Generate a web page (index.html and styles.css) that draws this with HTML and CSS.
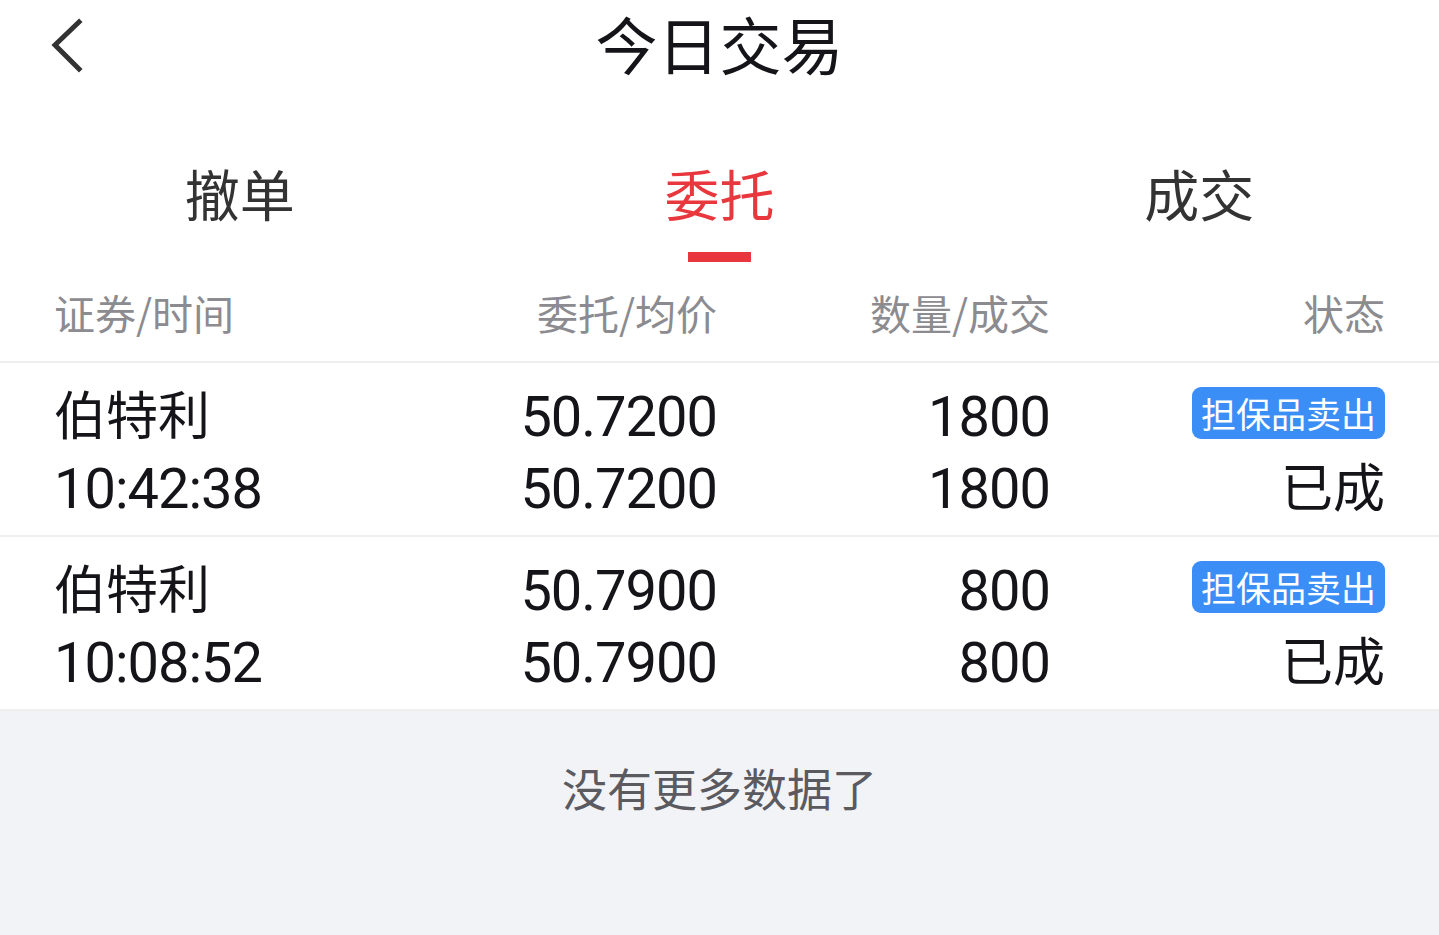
FILE: index.html
```html
<!DOCTYPE html>
<html lang="zh-CN">
<head>
    <meta charset="UTF-8">
    <meta name="viewport" content="width=device-width, initial-scale=1.0">
    <title>今日交易</title>
    <link rel="stylesheet" href="styles.css">
</head>
<body>
    <!-- 顶部导航 -->
    <div class="nav-bar">
        <a class="back-btn" href="#">
            <svg width="40" height="56" viewBox="0 0 40 56">
                <polyline points="29,4 5,27 29,51" fill="none" stroke="#333" stroke-width="5" stroke-linecap="square" stroke-linejoin="miter"/>
            </svg>
        </a>
        <div class="nav-title">今日交易</div>
    </div>

    <!-- 标签页 -->
    <div class="tabs">
        <div class="tab">
            <span class="tab-text">撤单</span>
            <span class="tab-line"></span>
        </div>
        <div class="tab active">
            <span class="tab-text">委托</span>
            <span class="tab-line"></span>
        </div>
        <div class="tab">
            <span class="tab-text">成交</span>
            <span class="tab-line"></span>
        </div>
    </div>

    <!-- 表头 -->
    <div class="list-head">
        <div class="col">证券/时间</div>
        <div class="col right">委托/均价</div>
        <div class="col right">数量/成交</div>
        <div class="col right">状态</div>
    </div>

    <!-- 委托列表 -->
    <div class="list">
        <div class="list-row">
            <div class="col">
                <div class="line">伯特利</div>
                <div class="line num">10:42:38</div>
            </div>
            <div class="col right">
                <div class="line num">50.7200</div>
                <div class="line num">50.7200</div>
            </div>
            <div class="col right">
                <div class="line num">1800</div>
                <div class="line num">1800</div>
            </div>
            <div class="col right">
                <div class="line"><span class="badge">担保品卖出</span></div>
                <div class="line">已成</div>
            </div>
        </div>
        <div class="list-row">
            <div class="col">
                <div class="line">伯特利</div>
                <div class="line num">10:08:52</div>
            </div>
            <div class="col right">
                <div class="line num">50.7900</div>
                <div class="line num">50.7900</div>
            </div>
            <div class="col right">
                <div class="line num">800</div>
                <div class="line num">800</div>
            </div>
            <div class="col right">
                <div class="line"><span class="badge">担保品卖出</span></div>
                <div class="line">已成</div>
            </div>
        </div>
    </div>

    <!-- 底部提示 -->
    <div class="no-more">没有更多数据了</div>
</body>
</html>
```

FILE: styles.css
```css
/* 基础样式 */
body {
    margin: 0;
    background-color: #fff;
    color: #141419;
    font-family: 'Noto Sans CJK SC', sans-serif;
}

/* 顶部导航 */
.nav-bar {
    height: 95px;
    display: flex;
    align-items: center;
    justify-content: center;
    position: relative;
}
.back-btn {
    position: absolute;
    left: 50px;
    top: 18px;
    display: block;
}
.back-btn svg {
    display: block;
}
.nav-title {
    font-size: 62px;
    line-height: 95px;
    margin-top: -8px;
    color: #141419;
}

/* 标签页 */
.tabs {
    display: flex;
    padding-top: 59px;
}
.tab {
    flex: 1;
    display: flex;
    flex-direction: column;
    align-items: center;
}
.tab-text {
    font-size: 55px;
    line-height: 76px;
    color: #333;
}
.tab-line {
    width: 63px;
    height: 10px;
    margin: 22px 0 8px;
    background: transparent;
}
.tab.active .tab-text {
    color: #e8383d;
}
.tab.active .tab-line {
    background: #e8383d;
}

/* 表头 */
.list-head {
    display: grid;
    grid-template-columns: 366px 297px 333px 1fr;
    padding: 0 54px 8px;
    height: 83px;
    align-items: center;
    font-size: 41px;
    color: #8b8b90;
    border-bottom: 2px solid #eeeeee;
}
.col.right {
    text-align: right;
}

/* 列表 */
.list-row {
    display: grid;
    grid-template-columns: 366px 297px 333px 1fr;
    padding: 14px 54px;
    border-bottom: 2px solid #f0f0f0;
}
.line {
    font-size: 52px;
    line-height: 72px;
    height: 72px;
    white-space: nowrap;
}
.line.num {
    font-family: 'Roboto', 'Noto Sans CJK SC', sans-serif;
    font-size: 56px;
    padding-top: 4px;
    height: 68px;
    line-height: 72px;
    letter-spacing: -1px;
}
.badge {
    display: inline-block;
    vertical-align: top;
    margin-top: 10px;
    height: 52px;
    line-height: 52px;
    padding: 0 9px;
    border-radius: 9px;
    background: #3a8ef6;
    color: #fff;
    font-size: 35px;
}

/* 底部提示 */
.no-more {
    box-sizing: border-box;
    background: #f2f3f7;
    height: 224px;
    padding-top: 45px;
    text-align: center;
    font-size: 45px;
    line-height: 64px;
    color: #5a5a60;
}
```
